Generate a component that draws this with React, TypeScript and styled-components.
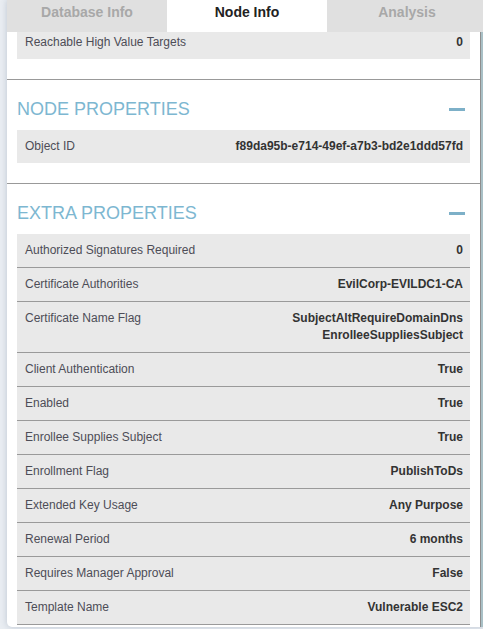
import React, { useLayoutEffect, useRef } from 'react'
import styled, { createGlobalStyle } from 'styled-components'

const GlobalStyle = createGlobalStyle`
  html, body {
    margin: 0;
    padding: 0;
    height: 100%;
    overflow: hidden;
    background: #e9edf2;
    font-family: "Liberation Sans", Arial, sans-serif;
  }
`

type Prop = { label: string; value: string | string[] }

const nodeProps: Prop[] = [
  { label: 'Object ID', value: 'f89da95b-e714-49ef-a7b3-bd2e1ddd57fd' },
]

const extraProps: Prop[] = [
  { label: 'Authorized Signatures Required', value: '0' },
  { label: 'Certificate Authorities', value: 'EvilCorp-EVILDC1-CA' },
  {
    label: 'Certificate Name Flag',
    value: ['SubjectAltRequireDomainDns', 'EnrolleeSuppliesSubject'],
  },
  { label: 'Client Authentication', value: 'True' },
  { label: 'Enabled', value: 'True' },
  { label: 'Enrollee Supplies Subject', value: 'True' },
  { label: 'Enrollment Flag', value: 'PublishToDs' },
  { label: 'Extended Key Usage', value: 'Any Purpose' },
  { label: 'Renewal Period', value: '6 months' },
  { label: 'Requires Manager Approval', value: 'False' },
  { label: 'Template Name', value: 'Vulnerable ESC2' },
]

const PropRow: React.FC<{ prop: Prop; bordered?: boolean }> = ({ prop, bordered }) => (
  <Row bordered={bordered ? 1 : 0}>
    <Label>{prop.label}</Label>
    <Value>
      {Array.isArray(prop.value)
        ? prop.value.map(v => <div key={v}>{v}</div>)
        : prop.value}
    </Value>
  </Row>
)

const Section: React.FC<{ title?: string; props: Prop[]; bordered?: boolean }> = ({
  title,
  props,
  bordered,
}) => (
  <SectionBox>
    {title && (
      <SectionHeader>
        <SectionTitle>{title}</SectionTitle>
        <Collapse />
      </SectionHeader>
    )}
    <Table>
      {props.map(p => (
        <PropRow key={p.label} prop={p} bordered={bordered} />
      ))}
    </Table>
  </SectionBox>
)

const App: React.FC = () => {
  const scrollRef = useRef<HTMLDivElement>(null)

  // the panel is scrolled a little, so the first row is cut at the top
  useLayoutEffect(() => {
    if (scrollRef.current) {
      scrollRef.current.scrollTop = 6
    }
  }, [])

  return (
    <>
      <GlobalStyle />
      <Panel>
        <TabBar>
          <Tab>Database Info</Tab>
          <Tab active={1}>Node Info</Tab>
          <Tab>Analysis</Tab>
        </TabBar>
        <Body>
          <Scroller ref={scrollRef}>
            <FirstSection>
              <Table>
                <PropRow prop={{ label: 'Reachable High Value Targets', value: '0' }} />
              </Table>
            </FirstSection>
            <Section title="Node Properties" props={nodeProps} />
            <Section title="Extra Properties" props={extraProps} bordered />
          </Scroller>
          <ScrollTrack />
        </Body>
      </Panel>
    </>
  )
}

const Panel = styled.div`
  margin-left: 7px;
  width: 480px;
  height: 627px;
  display: flex;
  flex-direction: column;
  background: #fff;
  border-radius: 0 0 5px 5px;
  box-shadow: 0 0 6px rgba(60, 80, 110, 0.25);
  overflow: hidden;
`

const TabBar = styled.div`
  display: flex;
  height: 32px;
  flex-shrink: 0;
  background: #e0e0e0;
`

const Tab = styled.div<{ active?: number }>`
  width: 160px;
  padding-top: 2px;
  box-sizing: border-box;
  text-align: center;
  font-size: 14px;
  line-height: 20px;
  font-weight: bold;
  color: ${p => (p.active ? '#222' : '#a8a8a8')};
  background: ${p => (p.active ? '#fff' : '#e0e0e0')};
`

const Body = styled.div`
  flex: 1;
  display: flex;
  min-height: 0;
`

const Scroller = styled.div`
  width: 474px;
  overflow: hidden;
`

const ScrollTrack = styled.div`
  width: 6px;
  border-left: 1px solid #8e8e8e;
  background: #a9c0c6;
`

const FirstSection = styled.div`
  padding: 0 10px 20px;
`

const SectionBox = styled.div`
  border-top: 1px solid #999;
  padding: 18px 10px 20px;
`

const SectionHeader = styled.div`
  display: flex;
  align-items: center;
  justify-content: space-between;
  margin-bottom: 10px;
  height: 22px;
`

const SectionTitle = styled.div`
  font-size: 18px;
  line-height: 22px;
  color: #7db7d1;
  text-transform: uppercase;
`

const Collapse = styled.span`
  width: 16px;
  height: 3px;
  margin-right: 5px;
  background: #7db0c8;
`

const Table = styled.div`
  display: flex;
  flex-direction: column;
`

const Row = styled.div<{ bordered?: number }>`
  display: flex;
  justify-content: space-between;
  align-items: flex-start;
  padding: 8px 7px 8px 8px;
  background: #e9e9e9;
  font-size: 12px;
  line-height: 17px;
  ${p => p.bordered && 'border-bottom: 1px solid #9a9a9a;'}
`

const Label = styled.div`
  color: #4d4d57;
`

const Value = styled.div`
  color: #333;
  font-weight: bold;
  text-align: right;
`

export default App
